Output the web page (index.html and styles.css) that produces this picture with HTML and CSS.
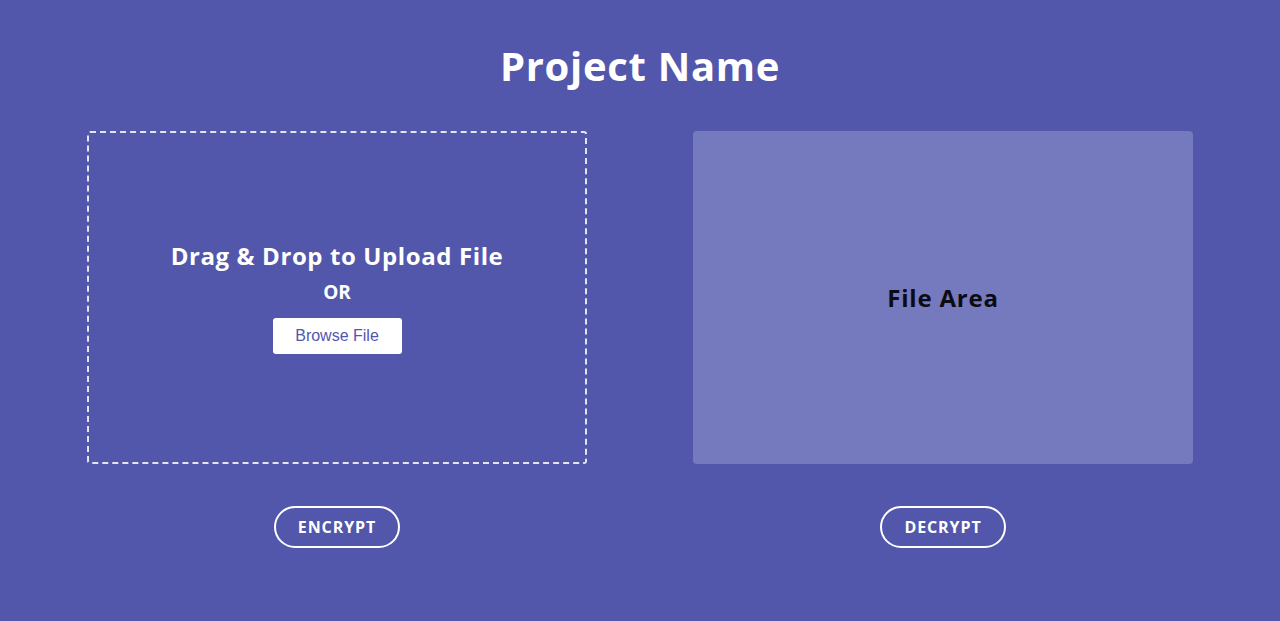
FILE: index.html
```html
<!DOCTYPE html>
<html lang="en">
<head>
<meta charset="utf-8">
<title>Project Name</title>
<link rel="stylesheet" href="styles.css">
</head>
<body>
<main class="page">
  <h1 class="title">Project Name</h1>
  <div class="columns">
    <section class="column">
      <div class="dropzone">
        <p class="drop-title">Drag &amp; Drop to Upload File</p>
        <p class="drop-or">OR</p>
        <button class="browse" type="button">Browse File</button>
      </div>
      <button class="action" type="button">ENCRYPT</button>
    </section>
    <section class="column">
      <div class="filearea">
        <p class="filearea-title">File Area</p>
      </div>
      <button class="action" type="button">DECRYPT</button>
    </section>
  </div>
</main>
</body>
</html>
```

FILE: styles.css
```css
html, body {
  margin: 0;
  padding: 0;
}
body {
  background: #5257ac;
  color: #fff;
  font-family: "Open Sans", "Liberation Sans", sans-serif;
  height: 621px;
  overflow: hidden;
}
.page {
  display: flex;
  flex-direction: column;
  align-items: center;
  padding-top: 40px;
}
.title {
  margin: 0;
  font-size: 40px;
  font-weight: 700;
  line-height: 52px;
  letter-spacing: 0.7px;
}
.columns {
  display: flex;
  gap: 106px;
  margin-top: 39px;
}
.column {
  width: 500px;
  display: flex;
  flex-direction: column;
  align-items: center;
}
.dropzone {
  box-sizing: border-box;
  width: 500px;
  height: 333px;
  border: 2px dashed #e4e5f3;
  border-radius: 3px;
  display: flex;
  flex-direction: column;
  align-items: center;
  justify-content: center;
}
.drop-title {
  margin: 0;
  font-size: 24px;
  font-weight: 700;
  line-height: 30px;
  letter-spacing: 0.6px;
}
.drop-or {
  margin: 9px 0 0;
  font-size: 19px;
  font-weight: 700;
  line-height: 24px;
}
.browse {
  margin-top: 14px;
  width: 129px;
  height: 36px;
  border: 0;
  border-radius: 3px;
  background: #fff;
  color: #5257ac;
  font-family: "Liberation Sans", Arial, sans-serif;
  font-size: 16px;
  padding: 0;
}
.filearea {
  width: 500px;
  height: 333px;
  border-radius: 4px;
  background: #7579bd;
  display: flex;
  align-items: center;
  justify-content: center;
}
.filearea-title {
  margin: 0;
  color: #0b0b14;
  font-size: 24px;
  font-weight: 700;
  letter-spacing: 0.8px;
}
.action {
  margin-top: 42px;
  box-sizing: border-box;
  width: 126px;
  height: 42px;
  border: 2px solid #fff;
  border-radius: 21px;
  background: transparent;
  color: #fff;
  font-family: "Open Sans", "Liberation Sans", sans-serif;
  font-size: 16px;
  font-weight: 700;
  letter-spacing: 0.9px;
  padding: 0;
}
```
